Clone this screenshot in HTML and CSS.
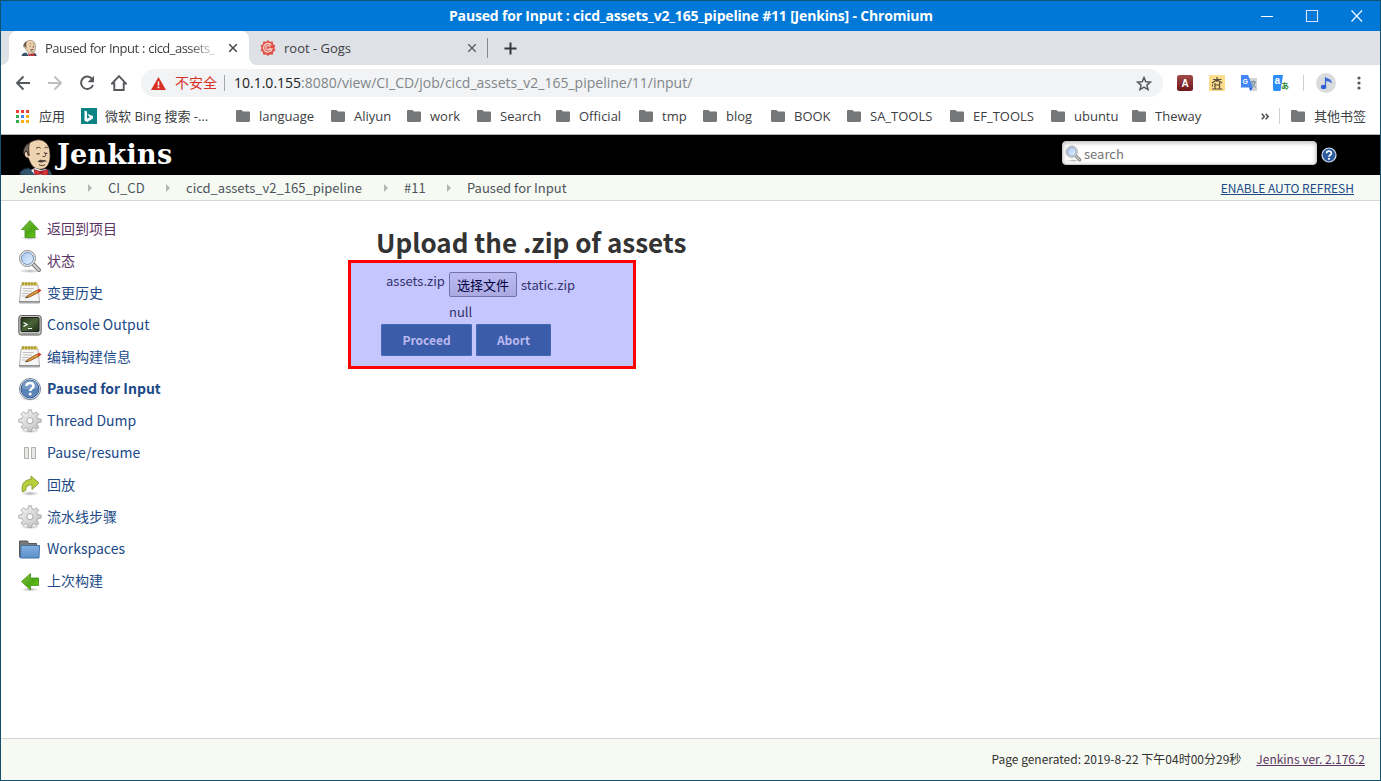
FILE: index.html
```html
<!DOCTYPE html>
<html lang="zh-CN">
<head>
<meta charset="utf-8">
<title>Paused for Input : cicd_assets_v2_165_pipeline #11 [Jenkins]</title>
<link rel="stylesheet" href="styles.css">
</head>
<body>
<svg class="defs" width="0" height="0" aria-hidden="true">
  <defs>
    <linearGradient id="gGreen" x1="0" y1="0" x2="1" y2="1"><stop offset="0" stop-color="#8bc34a"/><stop offset=".55" stop-color="#4da815"/><stop offset="1" stop-color="#73d216"/></linearGradient>
    <linearGradient id="gGrey" x1="0" y1="0" x2="1" y2="1"><stop offset="0" stop-color="#f8f8f8"/><stop offset="1" stop-color="#b9b9b9"/></linearGradient>
    <linearGradient id="gFolder" x1="0" y1="0" x2="0" y2="1"><stop offset="0" stop-color="#85b0e0"/><stop offset="1" stop-color="#5b8fcb"/></linearGradient>
    <linearGradient id="gTerm" x1="0" y1="0" x2="1" y2="1"><stop offset="0" stop-color="#24351c"/><stop offset=".5" stop-color="#4a6437"/><stop offset="1" stop-color="#1c2b16"/></linearGradient>
    <linearGradient id="gLens" x1="0" y1="0" x2="1" y2="1"><stop offset="0" stop-color="#a9c9ef"/><stop offset="1" stop-color="#e4f0fc"/></linearGradient>
    <linearGradient id="gRed" x1="0" y1="0" x2="0" y2="1"><stop offset="0" stop-color="#a34a4a"/><stop offset="1" stop-color="#6d1518"/></linearGradient>
    <radialGradient id="gShadow"><stop offset="0" stop-color="#000" stop-opacity=".3"/><stop offset="1" stop-color="#000" stop-opacity="0"/></radialGradient>
    <symbol id="folder" viewBox="0 0 14 12"><path fill="#757779" d="M1.200 0h4.300L7 1.600h5.800c.7 0 1.200.5 1.200 1.200v8c0 .7-.5 1.200-1.200 1.200H1.200C.5 12 0 11.500 0 10.800V1.200C0 .5.500 0 1.200 0z"/></symbol>
    <symbol id="butler" viewBox="0 0 33 36">
      <path fill="#31556d" stroke="#16222c" d="M1 36v-3l4-3 5-1 5 4 9-2 1-2 6 2 2 4v3z"/>
      <path fill="#efd2b0" stroke="#2b221c" stroke-width=".8" d="M7 8C10 3 15 .8 20 .8c6 .3 10 5 10.800 11 .4 4 .7 9-.8 12-1.500 4.500-5 6.500-9 6.500-5 0-8.500-3-10.500-8.500L9.300 19c-2.800-.2-4-2.500-3.800-4.500.2-1.500 1-2.500 2.500-2z"/>
      <path fill="#75695f" stroke="#2b221c" stroke-width=".8" d="M10.500 4C6 6 4 10 4.500 15l2-2.500 1.800.4.700 3.600h1.300c-.7-5-1-8.300.2-12.500z"/>
      <path fill="none" stroke="#2b221c" stroke-width=".9" d="M17 9.500c1.500-1.500 3.500-1.500 4.500-.3M25.500 9c1-1.200 2.500-1 3.300 0M25 13c1.500 2 2.500 3.500.7 4.500h-2M17.500 14.800h3.300M26 14.300h2.500M20 25.500c2 1.600 4.500 1.500 6 0"/>
      <path fill="#4b4039" d="M18.500 22.500c2-2 4-2.200 5.300-1.200 1.700-.8 3.400 0 4.200 1.500-2-.5-3.300 0-4.300.4-2 .7-3.700.2-5.200-.7z"/>
      <path fill="#f7f7f7" d="m12 31 4-2 6 2 5-1 1 6H16z"/>
      <path fill="#d8343a" stroke="#7a171b" stroke-width=".7" d="m15 30.500 6 2 2-.5 6-1.500V36h-5l-2-1-6 1z"/><circle cx="22" cy="33.500" r="1.800" fill="#a31f26"/>
    </symbol>
    <symbol id="lens" viewBox="0 0 24 24">
      <ellipse cx="12" cy="22" rx="11" ry="2" fill="url(#gShadow)"/>
      <path d="m15 15 6 6" stroke="#777" stroke-width="4" stroke-linecap="round"/><path d="m15.500 15.500 5.500 5.500" stroke="#d5d5d5" stroke-width="1.800" stroke-linecap="round"/>
      <circle cx="9.500" cy="9.500" r="8" fill="#eee" stroke="#888a85"/><circle cx="9.500" cy="9.500" r="6" fill="url(#gLens)" stroke="#6b8fbd"/>
    </symbol>
    <symbol id="notepad" viewBox="0 0 24 24">
      <path d="M3 4h17l1.500 16.500h-20z" fill="#f6f6f4" stroke="#a0a19d" stroke-width=".8"/><path d="M1.500 20.500h20v1.500h-20z" fill="#bbb" stroke="#777" stroke-width=".6"/>
      <path d="M3.500 1.500h16v2.800h-16z" fill="#d6c450"/><path d="M5 1v3M8 1v3M11 1v3M14 1v3M17 1v3" stroke="#8a7b1a"/>
      <path d="M5 7.500h11M5 10h9M4.500 12.500h6M4 15h4" stroke="#bcbcbc" stroke-width=".9"/>
      <path d="m7.500 17 2.500-2.800L19.300 9l1.600 2.300-9.400 4.700z" fill="#e09b3d" stroke="#81501e" stroke-width=".8"/><path d="m19.300 9 2-1.200 2.200 1.700-2.300 1.800z" fill="#d9381e"/><path d="m7.500 17 1.500-1.700.8 1z" fill="#333"/>
    </symbol>
    <symbol id="gear" viewBox="0 0 24 24">
      <ellipse cx="12" cy="22" rx="10" ry="2" fill="url(#gShadow)"/>
      <path fill="url(#gGrey)" stroke="#a0a0a0" stroke-width=".8" d="M10.500.8h3l.5 3 2 .8 2.500-1.700 2.200 2.200L19 7.600l.8 2 3.300.5v3l-3.200.7-.8 2 1.800 2.600-2.300 2.200-2.600-1.800-2 .8-.5 3h-3l-.6-3-2-.8-2.600 1.800L3 18.400l1.900-2.700-.9-2-3.200-.6v-3L4 9.600l.8-2L3 5.100l2.300-2.200 2.600 1.700 2-.8z"/>
      <circle cx="12" cy="11.600" r="5.200" fill="none" stroke="#ddd"/><circle cx="12" cy="11.600" r="3" fill="#fff" stroke="#aaa"/>
    </symbol>
    <symbol id="help" viewBox="0 0 24 24">
      <ellipse cx="12" cy="21.500" rx="10" ry="2.500" fill="url(#gShadow)"/>
      <circle cx="12" cy="12" r="10.500" fill="#fff" stroke="#6b8099"/><circle cx="12" cy="12" r="9" fill="#5a84b8" stroke="#315a90"/><path d="M4 11a8 8 0 0 1 16 0c-5 2-11 2-16 0z" fill="#fff" opacity=".18"/>
      <path d="M8.500 9c.2-4 7-4 7 0 0 2.300-3.300 2.500-3.300 5" fill="none" stroke="#fff" stroke-width="2.500"/><circle cx="12.200" cy="17" r="1.500" fill="#fff"/>
    </symbol>
    <symbol id="help-small" viewBox="0 0 16 16">
      <circle cx="8" cy="8" r="7" fill="#2c5a9c" stroke="#d5e0ee" stroke-width="1.200"/>
      <path d="M5.600 6.300c0-3 4.800-3 4.800 0C10.400 8 8 8 8 9.800" fill="none" stroke="#fff" stroke-width="1.700"/><circle cx="8" cy="11.800" r="1.100" fill="#fff"/>
    </symbol>
  </defs>
</svg>

<div class="window">
  <header class="titlebar">
    <span class="titlebar-text">Paused for Input : cicd_assets_v2_165_pipeline #11 [Jenkins] - Chromium</span>
    <svg class="window-controls" width="104" height="14" viewBox="0 0 104 14" fill="none" stroke="#fff" stroke-width="1.100"><path d="M1 7.500h12M91.500 1.500l10.500 11M102 1.500l-10.500 11"/><path stroke="#cfe4f8" stroke-width="1.200" d="M46.500 1.500h11v11h-11z"/></svg>
  </header>

  <nav class="tabs">
    <div class="tab tab-active">
      <svg class="tab-icon" width="16" height="16"><use href="#butler"/></svg>
      <span class="tab-label">Paused for Input : cicd_assets_</span>
      <svg class="tab-close" width="10" height="10" viewBox="0 0 10 10"><path d="m1.200 1.200 7.600 7.600M8.800 1.200 1.200 8.800" stroke="#4a4d51" stroke-width="1.600"/></svg>
      <svg class="tab-foot foot-left" width="8" height="8" viewBox="0 0 8 8"><path d="M8 0v8H0a8 8 0 0 0 8-8z" fill="#fff"/></svg>
      <svg class="tab-foot foot-right" width="8" height="8" viewBox="0 0 8 8"><path d="M0 0v8h8a8 8 0 0 1-8-8z" fill="#fff"/></svg>
    </div>
    <div class="tab tab-idle">
      <svg class="tab-icon" width="16" height="16" viewBox="0 0 16 16"><path fill="#dd5147" d="m8 0 1.700 1.700 3-.3.500 2.800 2.300 1.600L14.300 8l1.200 2.300-2.300 1.600-.5 2.800-3-.3L8 16l-1.700-1.600-3 .3-.5-2.800-2.300-1.600L1.700 8 .5 5.800l2.300-1.600.5-2.800 3 .3z"/><path d="M11.300 5.200A4.300 4.300 0 1 0 12 9H8.200M10 7a2.200 2.200 0 1 0-.2 2" fill="none" stroke="#f9cfca" stroke-width="1.300"/></svg>
      <span class="tab-label">root - Gogs</span>
      <svg class="tab-close" width="10" height="10" viewBox="0 0 10 10"><path d="m1.300 1.300 7.400 7.400M8.700 1.300 1.300 8.700" stroke="#5f6368" stroke-width="1.400"/></svg>
    </div>
    <svg class="new-tab" width="13" height="13" viewBox="0 0 13 13"><path d="M6.500.5v12M.5 6.500h12" stroke="#37393c" stroke-width="2"/></svg>
  </nav>

  <div class="toolbar">
    <div class="nav-buttons">
      <svg width="16" height="16" viewBox="0 0 16 16" fill="none" stroke="#55595d" stroke-width="1.900"><path d="M15 8H2M8.500 1.500 2 8l6.500 6.500"/></svg>
      <svg width="16" height="16" viewBox="0 0 16 16" fill="none" stroke="#bcbec0" stroke-width="1.900"><path d="M1 8h13M7.500 1.500 14 8l-6.500 6.500"/></svg>
      <svg width="16" height="16" viewBox="0 0 16 16"><path d="M13.300 4.200A6.200 6.200 0 1 0 14 10" fill="none" stroke="#55595d" stroke-width="2"/><path d="M15 .8v6.400H8.600z" fill="#55595d"/></svg>
      <svg width="16" height="16" viewBox="0 0 16 16"><path d="M1 8.500 8 1.200l7 7.300h-2.300V15H3.300V8.500z" fill="none" stroke="#55595d" stroke-width="1.900"/></svg>
    </div>
    <div class="omnibox">
      <svg class="warning" width="15" height="13" viewBox="0 0 15 13"><path d="M7.500 0 15 13H0z" fill="#d93025"/><path d="M7.500 4.500v4M7.500 9.500v1.800" stroke="#fff" stroke-width="1.600"/></svg>
      <span class="insecure">不安全</span>
      <span class="url"><b>10.1.0.155</b>:8080/view/CI_CD/job/cicd_assets_v2_165_pipeline/11/input/</span>
      <svg class="star" width="16" height="15" viewBox="0 0 16 15"><path d="m8 1.500 1.800 4.200 4.600.4-3.500 3 1.100 4.500L8 11.200l-4 2.400 1.100-4.500-3.500-3 4.600-.4z" fill="none" stroke="#55595d" stroke-width="1.500"/></svg>
    </div>
    <div class="extensions">
      <svg width="16" height="16" viewBox="0 0 16 16"><rect width="16" height="16" rx="2.500" fill="url(#gRed)"/><text class="ext-a" x="8" y="12" text-anchor="middle">A</text></svg>
      <svg width="16" height="16" viewBox="0 0 16 16"><path fill="#fbdd8c" d="M0 0h16v16H0z"/><path d="M8 2v5M4 4.500h8.500M7.500 5 3 8M8.500 5l4.500 3M6 8v5.500M10.500 7.500v6M6 10h4.500M3 14h10.500M3.500 9.500v2" fill="none" stroke="#594a3c" stroke-width="1.200"/></svg>
      <svg width="16" height="16" viewBox="0 0 16 16"><path fill="#d2d4d8" d="M6 3h10v13H9z"/><path fill="#4285f4" d="M0 0h7l5 12.500H0z"/><path fill="#2b5fd0" d="m8 12.500 4 0-2.500 3.500z"/><text class="ext-g" x="1.500" y="9">G</text><path d="M9.500 7H15M12.300 5.500V7M14 7c-.5 3-2 4.500-3.500 5.500M10.800 8c1 2 2.500 3.500 4 4.500" stroke="#688390" fill="none"/></svg>
      <svg width="16" height="16" viewBox="0 0 16 16" overflow="visible"><path fill="#2b8df7" d="M1.500 0H10L7.500 16H1.500A1.500 1.500 0 0 1 0 14.500v-13A1.500 1.500 0 0 1 1.500 0z"/><text class="ext-l" x="1.500" y="9">a</text><text class="ext-j" x="8" y="14">あ</text></svg>
    </div>
    <div class="profile"><svg width="12" height="14" viewBox="0 0 12 14"><path d="M5.500 10.500V2c1.500 1.500 5 .8 5.500 4-1.500-1.300-3.500-1.200-5.500-1.300" fill="#3367d6" stroke="#3367d6" stroke-width="1.200"/><ellipse cx="3.600" cy="10.900" rx="2.700" ry="2.200" fill="#2f5fd6"/></svg></div>
    <svg class="menu-dots" width="4" height="14" viewBox="0 0 4 14" fill="#55595d"><circle cx="2" cy="2" r="1.600"/><circle cx="2" cy="7" r="1.600"/><circle cx="2" cy="12" r="1.600"/></svg>
  </div>

  <nav class="bookmarks">
    <svg class="apps" width="13" height="13" viewBox="0 0 13 13"><path fill="#ea4335" d="M0 0h3v3H0zM5 0h3v3H5zM10 0h3v3h-3z"/><path fill="#34a853" d="M0 5h3v3H0zM0 10h3v3H0z"/><path fill="#4285f4" d="M5 5h3v3H5z"/><path fill="#fbae17" d="M10 5h3v3h-3zM5 10h3v3H5zM10 10h3v3h-3z"/></svg>
    <span class="bm-apps">应用</span>
    <svg class="bing" width="16" height="16" viewBox="0 0 16 16"><path fill="#0c8484" d="M0 0h16v16H0z"/><path fill="#fff" d="m3.500 2.500 2.500 1v7.200l3-1.800-1.500-.8-1-2.200 5.500 2v2.600l-6 3.500-2.500-1.500z"/></svg>
    <span class="bm-bing">微软 Bing 搜索 -…</span>
    <div class="folders">
      <span class="folder"><svg width="14" height="12"><use href="#folder"/></svg>language</span>
      <span class="folder"><svg width="14" height="12"><use href="#folder"/></svg>Aliyun</span>
      <span class="folder"><svg width="14" height="12"><use href="#folder"/></svg>work</span>
      <span class="folder"><svg width="14" height="12"><use href="#folder"/></svg>Search</span>
      <span class="folder"><svg width="14" height="12"><use href="#folder"/></svg>Official</span>
      <span class="folder"><svg width="14" height="12"><use href="#folder"/></svg>tmp</span>
      <span class="folder"><svg width="14" height="12"><use href="#folder"/></svg>blog</span>
      <span class="folder"><svg width="14" height="12"><use href="#folder"/></svg>BOOK</span>
      <span class="folder"><svg width="14" height="12"><use href="#folder"/></svg>SA_TOOLS</span>
      <span class="folder"><svg width="14" height="12"><use href="#folder"/></svg>EF_TOOLS</span>
      <span class="folder"><svg width="14" height="12"><use href="#folder"/></svg>ubuntu</span>
      <span class="folder"><svg width="14" height="12"><use href="#folder"/></svg>Theway</span>
    </div>
    <svg class="more" width="8" height="7" viewBox="0 0 8 7"><path d="m.8.800 2.500 2.700L.8 6.200M4.600.8l2.500 2.700-2.500 2.700" fill="none" stroke="#4a4d51" stroke-width="1.500"/></svg>
    <span class="folder other"><svg width="14" height="12"><use href="#folder"/></svg>其他书签</span>
  </nav>

  <div class="page">
    <header class="jenkins-header">
      <svg width="33" height="36"><use href="#butler"/></svg>
      <span class="brand">Jenkins</span>
      <div class="search"><svg width="17" height="17"><use href="#lens"/></svg><span>search</span></div>
      <svg class="search-help" width="16" height="16"><use href="#help-small"/></svg>
    </header>
    <div class="crumbs">
      <span class="crumb">Jenkins</span>
      <span class="crumb">CI_CD</span>
      <span class="crumb">cicd_assets_v2_165_pipeline</span>
      <span class="crumb">#11</span>
      <span class="crumb">Paused for Input</span>
      <a class="refresh">ENABLE AUTO REFRESH</a>
    </div>
    <div class="content">
      <nav class="tasks">
        <a class="task visited"><svg width="24" height="24" viewBox="0 0 24 24"><ellipse cx="12" cy="21" rx="9" ry="2" fill="url(#gShadow)"/><path d="m12 3.500 8.500 9H17v8H7v-8H3.500z" fill="url(#gGreen)" stroke="#3d8f16" stroke-width=".8"/></svg><span>返回到项目</span></a>
        <a class="task visited"><svg width="24" height="24"><use href="#lens"/></svg><span>状态</span></a>
        <a class="task"><svg width="24" height="24"><use href="#notepad"/></svg><span>变更历史</span></a>
        <a class="task"><svg width="24" height="24" viewBox="0 0 24 24"><rect x=".8" y="2.500" width="22.400" height="19.500" rx="2.500" fill="#c6c8c3" stroke="#5d5f5a"/><rect x="3" y="4.500" width="18" height="14" rx="1" fill="url(#gTerm)" stroke="#222"/><path d="m5.500 9.500 3.500 2-3.500 2M10 15.500h4" fill="none" stroke="#fff" stroke-width="1.200"/><path d="M3.500 20.500h17" stroke="#999"/></svg><span>Console Output</span></a>
        <a class="task"><svg width="24" height="24"><use href="#notepad"/></svg><span>编辑构建信息</span></a>
        <a class="task current"><svg width="24" height="24"><use href="#help"/></svg><span>Paused for Input</span></a>
        <a class="task"><svg width="24" height="24"><use href="#gear"/></svg><span>Thread Dump</span></a>
        <a class="task"><svg width="24" height="24" viewBox="0 0 24 24"><path d="M6.500 6.500h4v11h-4zM13.500 6.500h4v11h-4z" fill="#e8e8e6" stroke="#aeb0ac"/></svg><span>Pause/resume</span></a>
        <a class="task"><svg width="24" height="24" viewBox="0 0 24 24"><ellipse cx="12" cy="20.500" rx="9" ry="2.500" fill="url(#gShadow)"/><path d="M4.500 19C2.500 11 7 6.500 13 6.500V3l8 7-7 6.500V12c-4.500-.5-6.500 2-6 5z" fill="#b7cf3d" stroke="#84992b" stroke-width=".9"/></svg><span>回放</span></a>
        <a class="task"><svg width="24" height="24"><use href="#gear"/></svg><span>流水线步骤</span></a>
        <a class="task"><svg width="24" height="24" viewBox="0 0 24 24"><path d="M1.500 4h8l1 2.500h8V20h-17z" fill="#777975" stroke="#555753"/><path d="M3 8.500h18.500L21 21H2.500z" fill="url(#gFolder)" stroke="#4672a6"/></svg><span>Workspaces</span></a>
        <a class="task"><svg width="24" height="24" viewBox="0 0 24 24"><ellipse cx="12" cy="20.500" rx="9" ry="2" fill="url(#gShadow)"/><path d="m3.500 12.500 9-8v4.500h8v7.500h-8V21z" fill="url(#gGreen)" stroke="#3d8f16" stroke-width=".8"/></svg><span>上次构建</span></a>
      </nav>
      <main class="main">
        <h1>Upload the .zip of assets</h1>
        <form class="input-box">
          <div class="file-row">
            <span class="file-name">assets.zip</span>
            <button type="button" class="file-button">选择文件</button>
            <span class="chosen">static.zip</span>
          </div>
          <div class="null-row">null</div>
          <div class="actions">
            <button type="button" class="action proceed">Proceed</button>
            <button type="button" class="action abort">Abort</button>
          </div>
        </form>
      </main>
    </div>
    <footer class="footer"><span class="generated">Page generated: 2019-8-22 下午04时00分29秒</span><a class="version">Jenkins ver. 2.176.2</a></footer>
  </div>
</div>
</body>
</html>
```
FILE: styles.css
```css
* { box-sizing: border-box; }
body { margin: 0; overflow: hidden; }
svg { display: block; flex: none; }
.defs { position: absolute; }
.window {
  width: 1381px; height: 781px; border: 1px solid #11526f; background: #fff;
  display: flex; flex-direction: column; overflow: hidden;
  font: 13px/18px "Open Sans", "Noto Sans CJK SC", sans-serif; color: #3c4043; white-space: nowrap;
}

/* Window frame */
.titlebar { height: 30px; flex: none; background: #0078d7; color: #fff; display: flex; align-items: center; padding: 0 16px 0 448px; }
.titlebar-text { font-size: 14px; font-weight: 700; letter-spacing: -.18px; }
.window-controls { margin-left: auto; }

.tabs { height: 34px; flex: none; background: #dee1e6; display: flex; padding-left: 8px; }
.tab { display: flex; align-items: center; height: 34px; position: relative; }
.tab-active { width: 240px; background: #fff; border-radius: 8px 8px 0 0; padding: 0 11px 0 12px; }
.tab-idle { width: 239px; padding: 0 11px; }
.tab-idle::after { content: ""; position: absolute; right: 0; top: 7px; width: 1px; height: 20px; background: #85888c; }
.tab-label { margin-left: 8px; }
.tab-active .tab-label { width: 175px; letter-spacing: -.52px; word-spacing: .5px; -webkit-mask-image: linear-gradient(90deg, #000 82%, transparent); mask-image: linear-gradient(90deg, #000 82%, transparent); }
.tab-close { margin-left: auto; }
.tab-foot { position: absolute; bottom: 0; }
.foot-left { left: -8px; }
.foot-right { right: -8px; }
.new-tab { margin: 11px 0 0 16px; }

.toolbar { height: 37px; flex: none; display: flex; align-items: center; padding-bottom: 1px; }
.nav-buttons { display: flex; gap: 16px; margin-left: 14px; }
.omnibox { width: 1022px; height: 28px; margin-left: 14px; border-radius: 14px; background: #f1f3f4; display: flex; align-items: center; padding: 0 11px 0 10px; font-size: 14px; }
.insecure { color: #d93025; margin-left: 9px; width: 50px; border-right: 1px solid #a5a7aa; line-height: 16px; }
.url { color: #80868b; margin-left: 9px; }
.url b { font-weight: 400; color: #202124; }
.star { margin-left: auto; }
.extensions { display: flex; gap: 16px; margin-left: 14px; padding-right: 14px; border-right: 1px solid #cfd0d2; }
.ext-a { font: 700 10px "Liberation Sans", sans-serif; fill: #fff; }
.ext-g { font: 700 7px "Liberation Sans", sans-serif; fill: #fff; }
.ext-l { font: 700 10px "Liberation Sans", sans-serif; fill: #fff; }
.ext-j { font: 700 8px "Noto Sans CJK JP", sans-serif; fill: #2c8b35; }
.profile { width: 20px; height: 20px; border-radius: 50%; background: #dadbdd; display: grid; place-items: center; margin-left: 12px; }
.menu-dots { margin-left: 21px; }

.bookmarks { height: 33px; flex: none; display: flex; align-items: center; padding: 0 14px 4px 15px; border-bottom: 1px solid #b3b3b3; }
.bm-apps { margin-left: 10px; width: 42px; }
.bm-bing { margin-left: 8px; width: 131px; }
.folders { display: grid; grid-template-columns: 95px 76px 70px 79px 83px 64px 68px 76px 103px 101px 81px 120px; }
.folder { display: flex; align-items: center; gap: 9px; }
.more { margin-left: auto; }
.other { margin-left: 10px; padding-left: 11px; border-left: 1px solid #cfd0d2; height: 16px; }

/* Jenkins page */
.page { flex: 1; display: flex; flex-direction: column; font-family: "Noto Sans CJK SC", sans-serif; color: #333; min-height: 0; }
.jenkins-header { height: 40px; flex: none; background: #000; display: flex; padding: 4px 43px 0 18px; }
.brand { font: 700 27px/31px "DejaVu Serif", serif; color: #fff; margin-left: 5px; letter-spacing: .3px; }
.search { width: 255px; height: 24px; margin: 2px 4px 0 auto; border-radius: 4px; background: #fff; border: 1px solid #ccc; box-shadow: inset 0 1px 4px #bbb; display: flex; align-items: center; gap: 2px; padding-left: 2px; color: #757575; }
.search span { padding-top: 2px; }
.search-help { margin-top: 8px; }
.crumbs { height: 26px; flex: none; background: #f6faf2; border-bottom: 1px solid #d3d7cf; display: grid; grid-template-columns: 89px 78px 218px 63px 1fr auto; align-items: center; padding: 0 26px 0 18px; color: #4d545d; }
.crumb { display: flex; align-items: center; }
.crumb:not(:nth-child(5))::after { content: ""; margin: 0 16px 0 auto; border: 4px solid transparent; border-left-color: #b5b5b5; border-right: 0; }
.refresh { font-size: 12px; color: #204a87; text-decoration: underline; }
.content { flex: 1; display: flex; min-height: 0; }
.tasks { width: 347px; padding: 12px 0 0 17px; }
.task { height: 32px; display: flex; align-items: center; gap: 5px; font-size: 14px; color: #204a87; }
.task span { padding-bottom: 2px; }
.task.visited { color: #5c3566; }
.task.current { font-weight: 700; }
h1 { margin: 25px 0 0 28px; font-size: 26px; line-height: 32px; font-weight: 700; height: 34px; }
.input-box { width: 288px; height: 109px; border: 3px solid #f00; background: #c6c6ff; padding: 9px 0 0 30px; color: #33336b; }
.file-row { display: flex; height: 25px; padding-left: 5px; }
.file-name { width: 63px; }
.file-button { width: 68px; height: 25px; border: 1px solid #7272a8; border-radius: 2px; background: linear-gradient(#bcbcf3, #aaaae0); padding: 0; font: 13px "Noto Sans CJK SC", sans-serif; color: #000040; }
.chosen { margin: 4px 0 0 4px; }
.null-row { margin: 6px 0 0 68px; height: 21px; }
.actions { display: flex; gap: 4px; }
.action { height: 32px; border: 1px solid #4466b3; border-radius: 1px; background: #3b5ca8; color: #b9b9f0; padding: 0 0 2px; font: 700 12px "Noto Sans CJK SC", sans-serif; }
.proceed { width: 91px; }
.abort { width: 75px; }
.footer { height: 42px; flex: none; background: #f6faf2; border-top: 1px solid #d3d7cf; display: flex; justify-content: flex-end; align-items: center; gap: 15px; padding: 0 15px 2px 0; font-size: 12px; }
.version { color: #5c3566; text-decoration: underline; }
```
